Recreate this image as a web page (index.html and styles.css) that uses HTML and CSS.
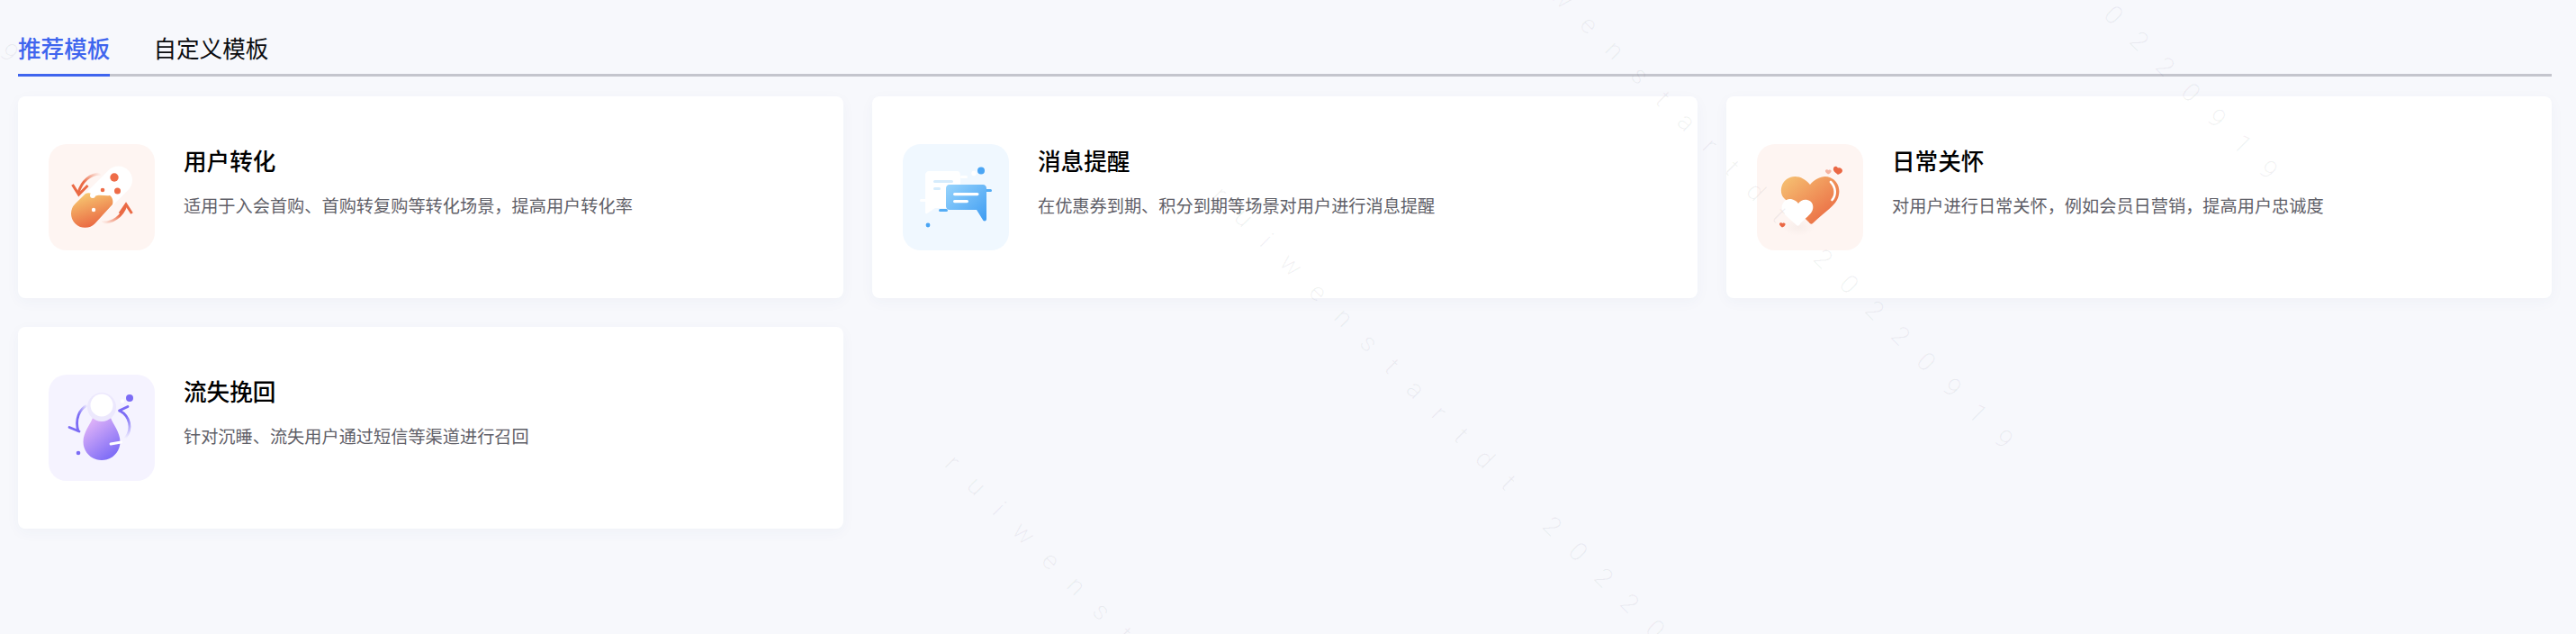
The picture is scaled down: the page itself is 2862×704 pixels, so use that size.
FILE: index.html
```html
<!DOCTYPE html>
<html lang="zh-CN">
<head>
    <meta charset="UTF-8">
    <meta name="viewport" content="width=device-width, initial-scale=1.0">
    <title>模板</title>
    <link rel="stylesheet" href="styles.css">
</head>
<body>
    <div class="container">
        <div class="tabs">
            <div class="tab active">推荐模板</div>
            <div class="tab">自定义模板</div>
        </div>

        <div class="cards">
            <div class="card">
                <div class="icon icon-red">
                    <svg viewBox="0 0 118 118" width="118" height="118">
                        <defs>
                            <linearGradient id="pill" x1="0.25" y1="0" x2="0.65" y2="1">
                                <stop offset="0" stop-color="#f7cb72"/>
                                <stop offset="1" stop-color="#e9613f"/>
                            </linearGradient>
                            <linearGradient id="arcA" x1="1" y1="0" x2="0" y2="1">
                                <stop offset="0" stop-color="#ea6a45" stop-opacity="0"/>
                                <stop offset="0.6" stop-color="#ea6a45"/>
                            </linearGradient>
                            <linearGradient id="arcB" x1="0" y1="1" x2="1" y2="0">
                                <stop offset="0" stop-color="#ea6a45" stop-opacity="0"/>
                                <stop offset="0.6" stop-color="#ea6a45"/>
                            </linearGradient>
                        </defs>
                        <path d="M58 33C46 33 37 41 33 54" fill="none" stroke="url(#arcA)" stroke-width="3"/>
                        <path d="M26.500 45L33.500 56L43.500 46" fill="none" stroke="#ea6a45" stroke-width="3"/>
                        <path d="M59 87C71 88 82 80 86 68" fill="none" stroke="url(#arcB)" stroke-width="3"/>
                        <path d="M79 77L86 67L92.500 77" fill="none" stroke="#ea6a45" stroke-width="3"/>
                        <path d="M40.500 77L77.500 40" fill="none" stroke="#fff" stroke-width="31" stroke-linecap="round"/>
                        <path d="M41 55C45 53 48 55 51 58C57 55 62 58 68 57C71 59 72 63 71 67L51.500 88.200A15.500 15.500 0 0 1 29.500 66.300Z" fill="url(#pill)"/>
                        <circle cx="49" cy="57" r="3" fill="#fff"/>
                        <circle cx="50" cy="73" r="2.200" fill="#fff"/>
                        <circle cx="73" cy="37" r="4.700" fill="#ee6c48"/>
                        <circle cx="76.500" cy="52" r="3.500" fill="#ee6c48"/>
                        <circle cx="60" cy="51" r="2.300" fill="#ee6c48"/>
                    </svg>
                </div>
                <div class="info">
                    <div class="title">用户转化</div>
                    <div class="desc">适用于入会首购、首购转复购等转化场景，提高用户转化率</div>
                </div>
            </div>

            <div class="card">
                <div class="icon icon-blue">
                    <svg viewBox="0 0 118 118" width="118" height="118">
                        <defs>
                            <linearGradient id="bubble" x1="0" y1="0" x2="1" y2="1">
                                <stop offset="0" stop-color="#97d4fc"/>
                                <stop offset="1" stop-color="#3e9cf2"/>
                            </linearGradient>
                        </defs>
                        <path d="M29 30H60C63 30 64 32 64 35V71H36L27 77C26 77.500 25 77 25 75V34C25 32 27 30 29 30Z" fill="#fff"/>
                        <rect x="64" y="35" width="8" height="3" rx="1.500" fill="#fff"/>
                        <rect x="19" y="61" width="8" height="3" rx="1.500" fill="#fff"/>
                        <rect x="34" y="40" width="22" height="3" rx="1.500" fill="#d6ecfc"/>
                        <rect x="34" y="48" width="8" height="3" rx="1.500" fill="#d6ecfc"/>
                        <circle cx="79" cy="32.500" r="2.700" fill="#fff"/>
                        <circle cx="87" cy="29.500" r="4" fill="#4aa5f4"/>
                        <circle cx="28" cy="90" r="2.400" fill="#4aa5f4"/>
                        <rect x="40" y="72" width="10" height="3" rx="1.500" fill="#55adf5"/>
                        <rect x="90" y="50" width="9" height="3" rx="1.500" fill="#55adf5"/>
                        <path d="M52 45H89C91.500 45 93 47 93 49V83C93 85.500 91 86 89.500 85L82 73H52C49.500 73 48 71 48 69V49C48 47 49.500 45 52 45Z" fill="url(#bubble)"/>
                        <rect x="56" y="54" width="28.500" height="3.200" rx="1.600" fill="#fff"/>
                        <rect x="56" y="62" width="17" height="3.200" rx="1.600" fill="#fff"/>
                    </svg>
                </div>
                <div class="info">
                    <div class="title">消息提醒</div>
                    <div class="desc">在优惠券到期、积分到期等场景对用户进行消息提醒</div>
                </div>
            </div>

            <div class="card">
                <div class="icon icon-red">
                    <svg viewBox="0 0 118 118" width="118" height="118">
                        <defs>
                            <linearGradient id="heart" x1="0" y1="0" x2="1" y2="1">
                                <stop offset="0" stop-color="#f6c474"/>
                                <stop offset="1" stop-color="#e95f3d"/>
                            </linearGradient>
                            <radialGradient id="heartShade">
                                <stop offset="0" stop-color="#e9dcd8" stop-opacity="0.3"/>
                                <stop offset="1" stop-color="#e9dcd8" stop-opacity="0"/>
                            </radialGradient>
                        </defs>
                        <ellipse cx="46" cy="92" rx="18" ry="10" fill="url(#heartShade)"/>
                        <path d="M58 87L30 60C25 55 26 44 33 39C41 33 52 36 59 45C65 38 74 34 81 37C91 41 94 52 89 62C84 71 72 78 62 88C61 89 59 89 58 87Z" fill="url(#heart)"/>
                        <path d="M82 42C88 48 88 57 83.500 62" fill="none" stroke="#fff" stroke-width="2.600" stroke-linecap="round"/>
                        <path d="M56.500 66C60.500 69 60.500 74 57.500 77" fill="none" stroke="#fff" stroke-width="2"/>
                        <path d="M44 90C40 86 30 79 28 73C26 66 32 60 38 61C41 62 44 63 46 66C48 63 52 61 56 62C62 63 64 70 61 75C58 80 50 85 47 90C46 91 45 91 44 90Z" fill="#fff"/>
                        <path d="M90 34C88 32 84 30 85 27C85.500 24.500 88.500 24 90 26.500C92 25.500 95 27 95 29.500C95 32 92 33 90 34Z" fill="#ea6845"/>
                        <path d="M79 33.500C78 32.500 75.500 31 76 29.500C76.500 28 78.500 28 79.500 29C81 28 83 29 82.500 30.500C82 32 80.500 33 79 33.500Z" fill="#f5b3a0"/>
                        <path d="M28 92.500C27 91.500 24.500 90 25 88.500C25.500 87 27.500 87 28.500 88C30 87 32 88 31.500 89.500C31 91 29.500 92 28 92.500Z" fill="#ea6845"/>
                    </svg>
                </div>
                <div class="info">
                    <div class="title">日常关怀</div>
                    <div class="desc">对用户进行日常关怀，例如会员日营销，提高用户忠诚度</div>
                </div>
            </div>

            <div class="card">
                <div class="icon icon-purple">
                    <svg viewBox="0 0 118 118" width="118" height="118">
                        <defs>
                            <linearGradient id="drop" x1="0.2" y1="0.1" x2="0.8" y2="1">
                                <stop offset="0" stop-color="#dcb0f8"/>
                                <stop offset="1" stop-color="#7667f6"/>
                            </linearGradient>
                            <linearGradient id="arcL" x1="1" y1="0" x2="0" y2="1">
                                <stop offset="0" stop-color="#7c6cf5" stop-opacity="0"/>
                                <stop offset="0.6" stop-color="#7c6cf5"/>
                            </linearGradient>
                            <linearGradient id="arcR" x1="0" y1="0" x2="0" y2="1">
                                <stop offset="0.2" stop-color="#7c6cf5"/>
                                <stop offset="1" stop-color="#7c6cf5" stop-opacity="0"/>
                            </linearGradient>
                        </defs>
                        <path d="M43 34C34 38 29 50 33 63" fill="none" stroke="url(#arcL)" stroke-width="2.800"/>
                        <path d="M23 58.500L34 63" fill="none" stroke="#7c6cf5" stroke-width="2.800" stroke-linecap="round"/>
                        <path d="M79 40C90 46 94 60 85 71" fill="none" stroke="url(#arcR)" stroke-width="2.800"/>
                        <path d="M88 35.500L78.500 40" fill="none" stroke="#7c6cf5" stroke-width="2.800" stroke-linecap="round"/>
                        <path d="M49 48C47 54 38.500 64 38.500 74.500C38.500 86 47.500 95 59 95C70.500 95 79.500 86 79.500 74.500C79.500 64 71 54 69 48Z" fill="url(#drop)"/>
                        <circle cx="59" cy="36" r="16" fill="#ece8fd"/>
                        <circle cx="59" cy="34" r="12.500" fill="#fff"/>
                        <path d="M69 77L80.500 75" fill="none" stroke="#fff" stroke-width="2.800" stroke-linecap="round"/>
                        <circle cx="90" cy="26" r="4" fill="#7c6cf5"/>
                        <circle cx="82" cy="29.500" r="2.200" fill="#fff"/>
                        <circle cx="33" cy="87" r="2.300" fill="#7c6cf5"/>
                    </svg>
                </div>
                <div class="info">
                    <div class="title">流失挽回</div>
                    <div class="desc">针对沉睡、流失用户通过短信等渠道进行召回</div>
                </div>
            </div>
        </div>
    </div>

    <!-- diagonal user watermark, sits over the whole page -->
    <div class="watermark" aria-hidden="true">
        <span class="mark mark-1">ruiwenstartdt 20220919</span>
        <span class="mark mark-2">ruiwenstartdt 20220919</span>
        <span class="mark mark-3">ruiwenstartdt 20220919</span>
        <span class="mark mark-4">ruiwenstartdt 20220919</span>
        <span class="mark mark-5">ruiwenstartdt 20220919</span>
    </div>
</body>
</html>
```

FILE: styles.css
```css
body {
    font-family: "Noto Sans CJK SC", "Liberation Sans", sans-serif;
    background-color: #f7f8fc;
    margin: 0;
    padding: 0;
    height: 704px;
    overflow: hidden;
}

.container {
    padding: 35px 27px 0 20px;
}

.tabs {
    display: flex;
    gap: 48px;
    border-bottom: 3px solid #c4c5cd;
}

.tab {
    font-size: 25.6px;
    line-height: 36px;
    padding-bottom: 11px;
    margin-bottom: -3px;
    border-bottom: 3px solid transparent;
    color: #0c0d10;
}

.tab.active {
    color: #3f65ee;
    font-weight: 500;
    border-bottom-color: #3f65ee;
}

.cards {
    display: grid;
    grid-template-columns: repeat(3, 1fr);
    gap: 32px;
    margin-top: 22px;
}

.card {
    display: flex;
    gap: 32px;
    height: 224px;
    box-sizing: border-box;
    padding: 53px 34px;
    background-color: #fff;
    border-radius: 8px;
    box-shadow: 0 4px 16px rgba(60, 70, 120, 0.04);
}

.icon {
    width: 118px;
    height: 118px;
    flex-shrink: 0;
    border-radius: 20px;
}

.icon svg {
    display: block;
}

.icon-red {
    background-color: #fef5f2;
}

.icon-blue {
    background-color: #f0f8ff;
}

.icon-purple {
    background-color: #f5f3ff;
}

.title {
    font-size: 25.6px;
    font-weight: 500;
    line-height: 36px;
    margin-top: 0;
    color: #000;
}

.desc {
    font-size: 19.2px;
    line-height: 28px;
    margin-top: 18px;
    color: #5f6068;
}

.watermark {
    position: absolute;
    top: 0;
    left: 0;
    width: 2862px;
    height: 704px;
    overflow: hidden;
    pointer-events: none;
}

.mark {
    position: absolute;
    font-family: Roboto, "Liberation Sans", sans-serif;
    font-size: 28.8px;
    font-weight: 300;
    line-height: 30px;
    letter-spacing: 24.500px;
    white-space: nowrap;
    color: rgba(30, 35, 60, 0.06);
    transform: rotate(45deg);
    transform-origin: 0 0;
}

.mark-1 { left: 1958px; top: -395px; }
.mark-2 { left: 1664px; top: -96px; }
.mark-3 { left: 1363px; top: 201px; }
.mark-4 { left: 1066px; top: 499px; }
.mark-5 { left: -552px; top: -525px; }
```
